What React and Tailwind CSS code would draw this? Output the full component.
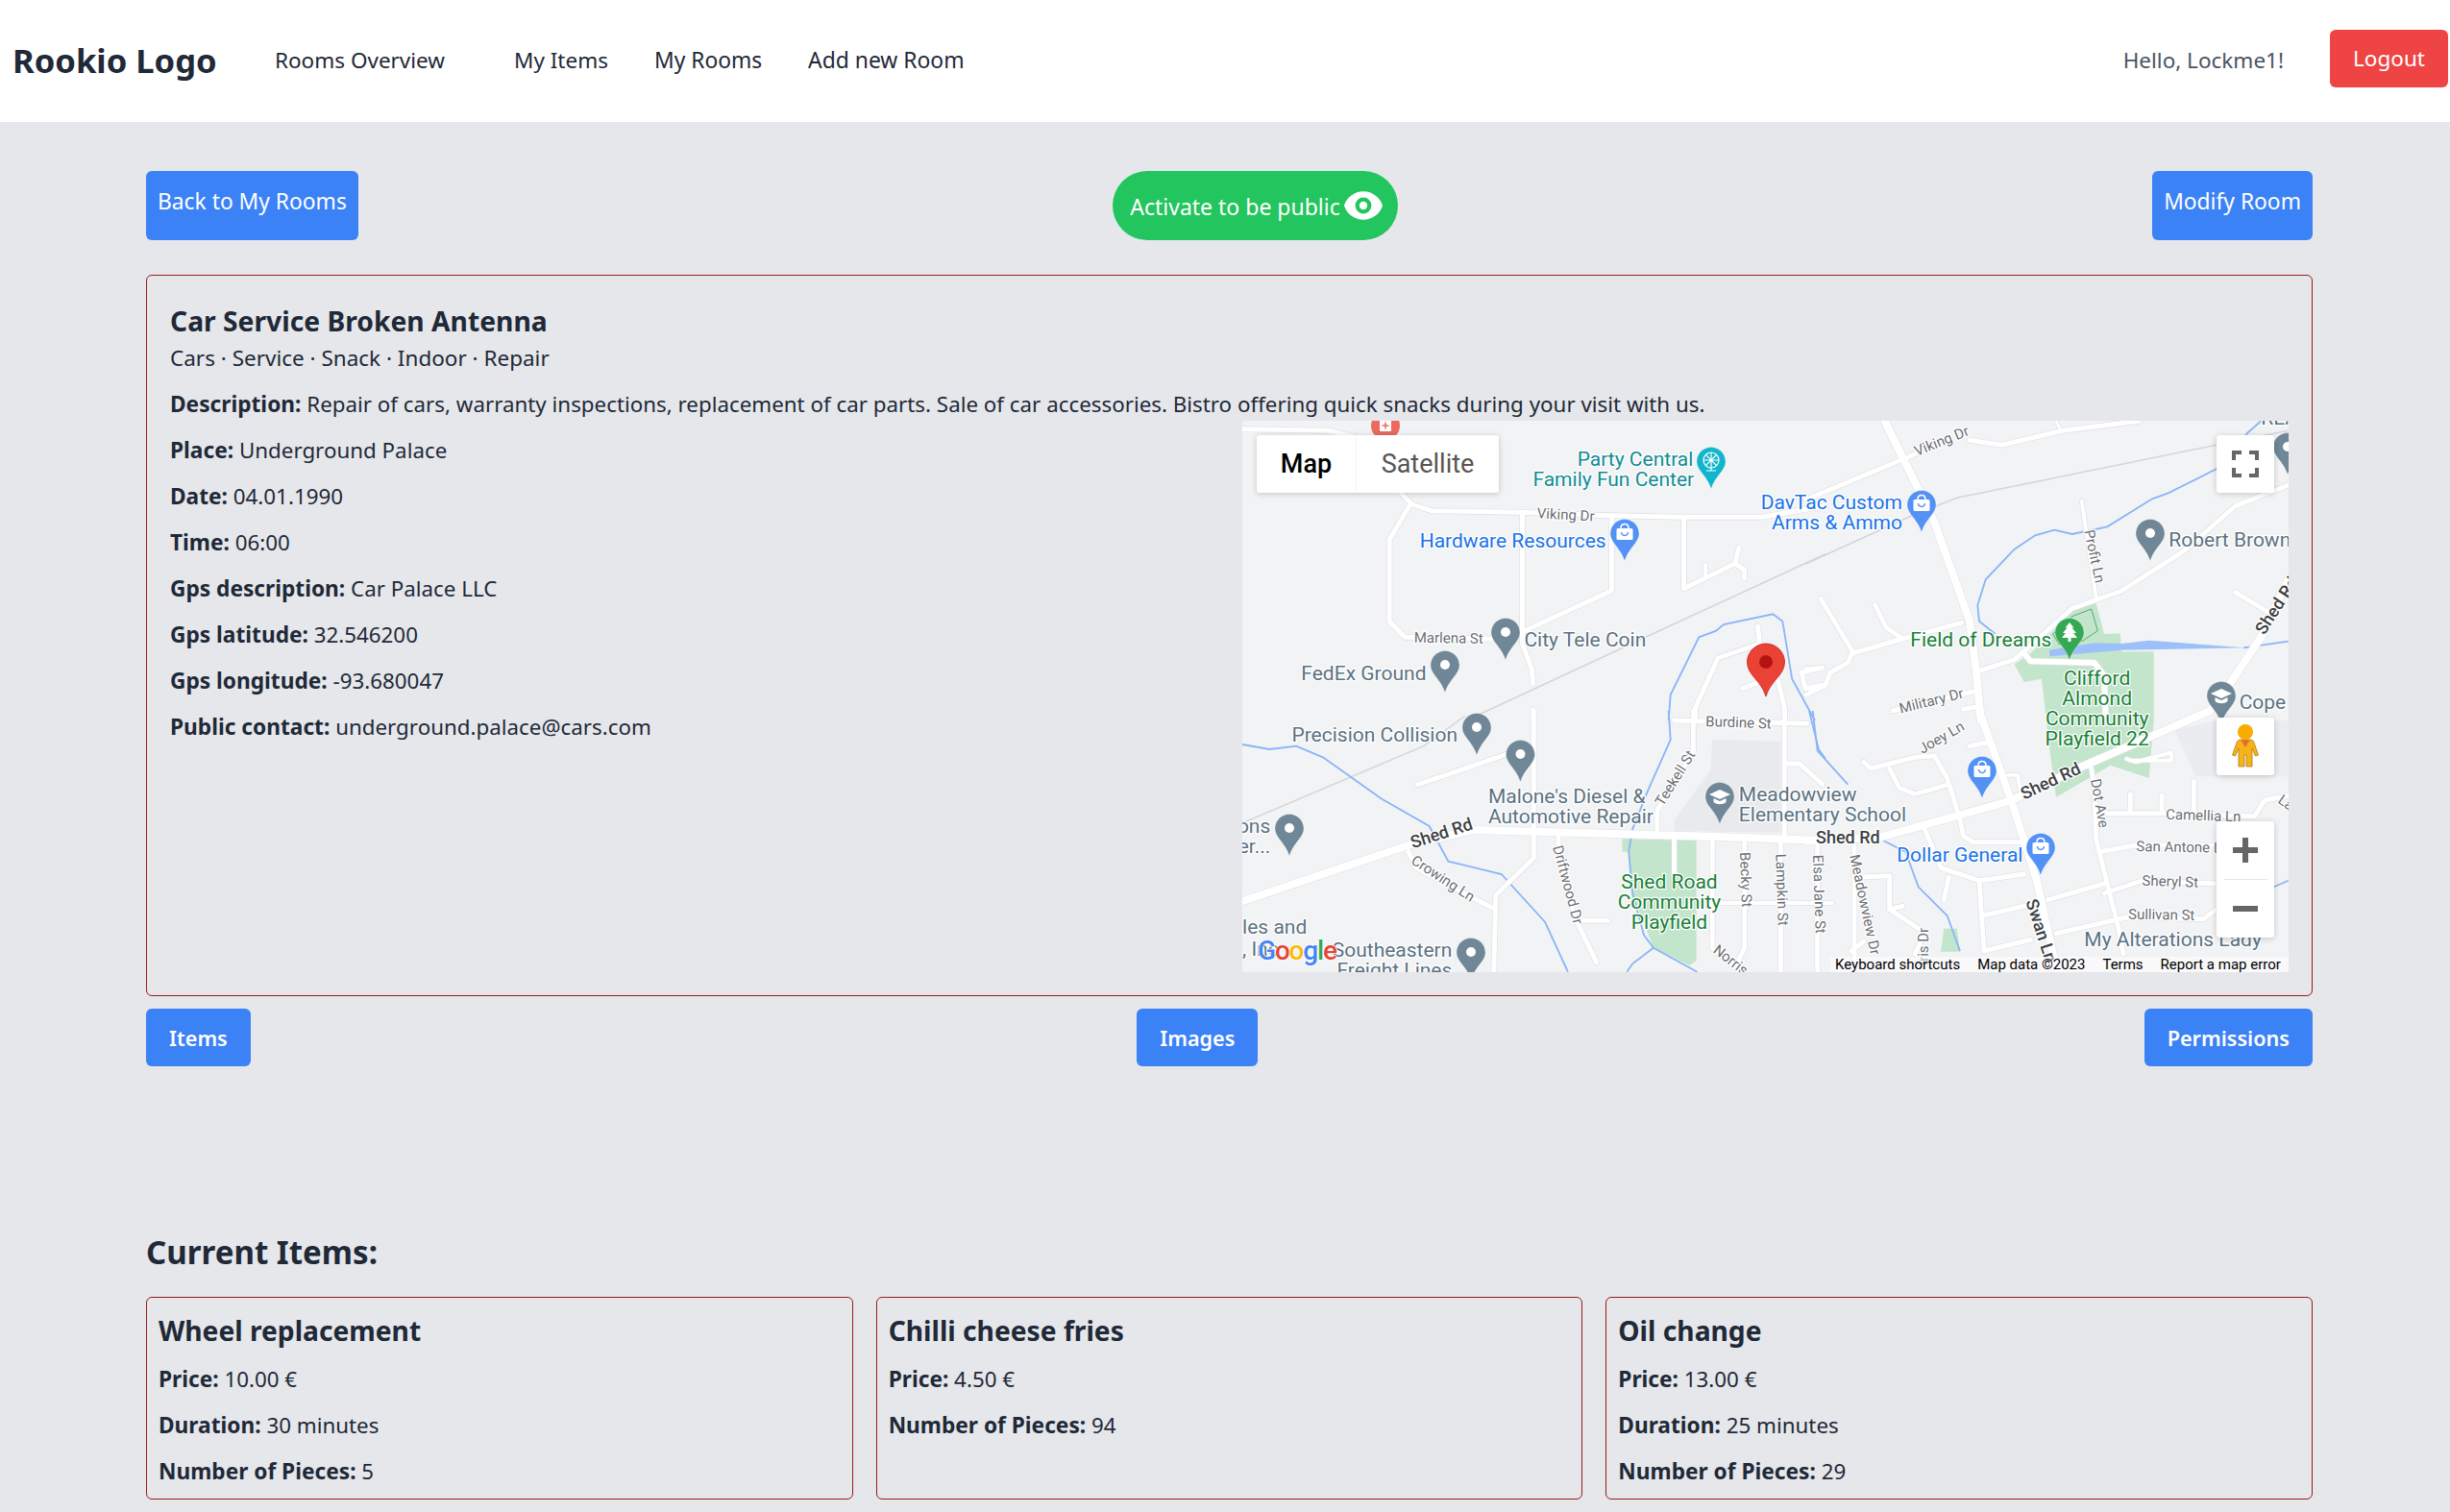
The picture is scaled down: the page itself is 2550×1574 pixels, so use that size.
import React from "react";
import { HiEye } from "react-icons/hi";

const Z3 = ([x, y]) => [1280 + x / 2.529, 430 + y / 3];
const Z4 = ([x, y]) => [1880 + x / 3, 430 + y / 3];
const Z5 = ([x, y]) => [1280 + x / 2.529, 740 + y / 3];
const Z6 = ([x, y]) => [1880 + x / 3, 740 + y / 3];
const path = (z, pts) =>
  pts.map((p, i) => { const [x, y] = z(p); return `${i ? "L" : "M"}${x.toFixed(1)} ${y.toFixed(1)}`; }).join(" ");

const roads = [
  [Z3, [[33,50],[260,55],[330,75]], 5],
  [Z3, [[450,250],[480,285],[530,305],[760,310],[1000,320],[1190,325],[1400,325],[1568,290]], 5],
  [Z4, [[0,270],[300,145],[340,128]], 5],
  [Z4, [[510,85],[610,100],[800,55],[1040,25]], 5],
  [Z4, [[780,25],[795,55]], 3],
  [Z3, [[475,285],[420,395],[420,650],[460,700],[690,705]], 5],
  [Z3, [[770,315],[770,720],[795,800],[798,845]], 5],
  [Z3, [[1005,325],[1005,555],[775,680]], 5],
  [Z3, [[1195,330],[1195,548],[1330,470],[1340,420]], 5],
  [Z3, [[1330,470],[1355,490],[1355,515]], 5],
  [Z3, [[1252,475],[1252,510]], 4],
  [Z3, [[1390,665],[1395,720],[1285,765],[1225,920],[1225,960]], 5],
  [Z3, [[1350,860],[1440,820],[1460,920],[1460,960]], 5],
  [Z3, [[1505,810],[1560,795]], 5],
  [Z3, [[1505,810],[1515,860],[1560,850]], 5],
  [Z3, [[798,925],[798,960]], 4],
  [Z4, [[540,805],[650,770],[740,690],[830,610],[985,555],[1180,430],[1340,290],[1505,225]], 5],
  [Z4, [[905,575],[860,275]], 4],
  [Z4, [[45,580],[145,745],[130,780],[75,810],[60,850],[0,880]], 5],
  [Z4, [[145,750],[300,705],[485,655]], 5],
  [Z4, [[215,600],[250,670],[300,705]], 5],
  [Z4, [[0,800],[40,797]], 5],
  [Z4, [[270,930],[520,870]], 5],
  [Z4, [[490,925],[530,918]], 5],
  [Z4, [[680,750],[700,775],[900,780],[930,820],[935,960]], 6],
  [Z4, [[1340,560],[1440,620]], 5],
  [Z6, [[180,160],[200,180],[340,145],[400,140],[440,210],[480,340],[490,390],[520,410],[680,410]], 5],
  [Z6, [[260,180],[290,240],[340,260],[445,230]], 5],
  [Z6, [[370,370],[420,490],[540,530],[680,510]], 5],
  [Z6, [[540,530],[555,750],[700,715]], 5],
  [Z6, [[550,640],[680,610]], 5],
  [Z6, [[445,520],[430,590]], 5],
  [Z6, [[510,110],[560,100]], 5],
  [Z6, [[630,200],[660,200],[670,260]], 4],
  [Z6, [[890,180],[900,240],[905,400],[975,680],[990,760]], 5],
  [Z6, [[930,320],[1120,320],[1400,330],[1430,280],[1505,265]], 5],
  [Z6, [[1210,220],[1210,320]], 5],
  [Z6, [[1012,260],[1012,320]], 5],
  [Z6, [[1110,265],[1110,320]], 5],
  [Z6, [[915,440],[1030,420],[1270,420]], 5],
  [Z6, [[930,570],[1050,530],[1280,540]], 5],
  [Z6, [[755,590],[930,540]], 5],
  [Z6, [[780,695],[1000,645],[1240,650],[1280,620]], 5],
  [Z6, [[1000,150],[1030,160],[1140,130],[1140,155],[1010,155]], 4],
  [Z5, [[495,230],[730,135]], 5],
  [Z5, [[800,0],[800,460],[700,575],[695,815]], 5],
  [Z5, [[470,440],[490,490],[690,615]], 5],
  [Z5, [[865,390],[865,450],[910,650],[965,785]], 5],
  [Z5, [[920,655],[995,655]], 5],
  [Z5, [[1125,370],[1125,310],[1220,130],[1220,0]], 5],
  [Z5, [[1170,30],[1520,40]], 5],
  [Z5, [[1460,0],[1460,400]], 5],
  [Z5, [[1460,165],[1500,165],[1560,230]], 5],
  [Z5, [[1270,400],[1270,740],[1330,800],[1355,740],[1355,400]], 5],
  [Z5, [[1450,405],[1450,815]], 5],
  [Z5, [[1170,400],[1170,510]], 5],
  [Z5, [[1290,600],[1568,600]], 4],
  [Z6, [[0,600],[80,600]], 4],
  [Z6, [[35,410],[35,815]], 5],
  [Z6, [[150,420],[150,815]], 5],
  [Z6, [[160,520],[260,515],[260,620],[350,680]], 5],
  [Z6, [[260,620],[300,610]], 5],
  [Z6, [[140,750],[180,720]], 5],
  [Z6, [[340,760],[370,690]], 5],
];

const mains = [
  [Z5, [[33,595],[470,420],[640,372],[1200,390],[1568,405]], 8],
  [Z6, [[0,405],[230,395],[640,280],[870,170],[1260,0]], 8],
  [Z4, [[1260,930],[1300,880],[1420,700],[1505,520]], 8],
  [Z4, [[245,25],[400,340],[510,650],[530,800],[545,960]], 8],
  [Z6, [[540,0],[640,280],[720,530],[770,760],[790,815]], 8],
];

const rivers = [
  [Z3, [[1540,960],[1480,830],[1455,650],[1430,628],[1300,660],[1280,680],[1235,700],[1160,880],[1155,960]]],
  [Z5, [[1155,0],[1160,90],[1100,250],[1060,370],[1050,440],[1060,570],[1090,700],[1115,740],[1060,790],[1045,815]]],
  [Z5, [[1115,740],[1230,815]]],
  [Z5, [[1525,0],[1550,120],[1568,150]]],
  [Z6, [[20,0],[35,125],[130,230]]],
  [Z6, [[240,405],[310,440],[350,550],[440,640],[480,750]]],
  [Z5, [[33,105],[105,120],[175,110],[245,145],[400,275],[525,360],[575,470],[715,510],[830,660],[890,815]]],
  [Z4, [[1420,25],[1380,60],[1280,175],[1130,250],[1080,268],[940,355],[830,378],[775,365],[715,382],[650,425],[560,520],[535,600],[540,650],[590,690]]],
  [Z4, [[1365,733],[1505,713]]],
  [Z6, [[1460,550],[1505,530]]],
];

const rails = [
  [Z3, [[650,945],[1130,680],[1568,440]]],
  [Z4, [[0,470],[330,320],[470,265],[640,230],[1280,100],[1505,55]]],
  [Z5, [[620,15],[510,110],[33,350]]],
];

const poly = (z, pts) => path(z, pts) + " Z";

const LABEL = "#5b7282";
const BLUE = "#1a73e8";
const GREEN = "#188038";
const TEAL = "#0f8c94";
const STREET = "#6a6e72";
const DARK = "#3c4043";

// [zone, x, y, text, color, size, anchor, rotation]
const labels = [
  [Z3,1220,165,"Party Central",TEAL,21,"end"],
  [Z3,1222,228,"Family Fun Center",TEAL,21,"end"],
  [Z3,500,420,"Hardware Resources",BLUE,21],
  [Z4,300,300,"DavTac Custom",BLUE,21,"end"],
  [Z4,300,362,"Arms & Ammo",BLUE,21,"end"],
  [Z3,808,328,"Viking Dr",STREET,15,"start",3],
  [Z3,485,716,"Marlena St",STREET,15,"start",1],
  [Z3,775,730,"City Tele Coin",LABEL,21],
  [Z3,188,833,"FedEx Ground",LABEL,21],
  [Z4,345,135,"Viking Dr",STREET,15,"start",-22],
  [Z4,868,368,"Profit Ln",STREET,15,"start",78],
  [Z4,1132,418,"Robert Brown",LABEL,21],
  [Z4,1430,695,"Shed Rd",DARK,18,"start",-57],
  [Z4,325,730,"Field of Dreams",GREEN,21],
  [Z4,908,850,"Clifford",GREEN,21,"middle"],
  [Z4,908,912,"Almond",GREEN,21,"middle"],
  [Z4,908,975,"Community",GREEN,21,"middle"],
  [Z6,908,108,"Playfield 22",GREEN,21,"middle"],
  [Z4,1352,925,"Cope",LABEL,21],
  [Z4,295,938,"Military Dr",STREET,15,"start",-14],
  [Z4,1420,35,"REA",LABEL,21],
  [Z5,1252,48,"Burdine St",STREET,15,"start",2],
  [Z5,163,97,"Precision Collision",LABEL,21],
  [Z5,680,288,"Malone's Diesel &",LABEL,21],
  [Z5,680,352,"Automotive Repair",LABEL,21],
  [Z5,1140,300,"Teekell St",STREET,15,"start",-58],
  [Z5,1340,282,"Meadowview",LABEL,21],
  [Z5,1340,345,"Elementary School",LABEL,21],
  [Z5,482,430,"Shed Rd",DARK,18,"start",-18],
  [Z5,475,475,"Crowing Ln",STREET,15,"start",33],
  [Z5,850,425,"Driftwood Dr",STREET,15,"start",75],
  [Z5,1157,555,"Shed Road",GREEN,21,"middle"],
  [Z5,1157,618,"Community",GREEN,21,"middle"],
  [Z5,1157,680,"Playfield",GREEN,21,"middle"],
  [Z5,1343,442,"Becky St",STREET,15,"start",88],
  [Z5,1437,447,"Lampkin St",STREET,15,"start",88],
  [Z5,1535,450,"Elsa Jane St",STREET,15,"start",88],
  [Z5,1270,752,"Norris",STREET,15,"start",38],
  [Z5,107,380,"ons",LABEL,21,"end"],
  [Z5,107,445,"er...",LABEL,21,"end"],
  [Z5,203,697,"les and",LABEL,21,"end"],
  [Z5,33,765,", Inc",LABEL,21],
  [Z5,585,767,"Southeastern",LABEL,21,"end"],
  [Z5,585,830,"Freight Lines",LABEL,21,"end"],
  [Z6,135,452,"Meadowview Dr",STREET,15,"start",78],
  [Z6,362,135,"Joey Ln",STREET,15,"start",-30],
  [Z6,680,278,"Shed Rd",DARK,18,"start",-25],
  [Z6,888,215,"Dot Ave",STREET,15,"start",80],
  [Z6,1122,338,"Camellia Ln",STREET,15,"start",2],
  [Z6,1470,285,"La",STREET,15,"start",35],
  [Z6,1030,438,"San Antone Ln",STREET,15,"start",1],
  [Z6,1048,545,"Sheryl St",STREET,15,"start",2],
  [Z6,1005,650,"Sullivan St",STREET,15,"start",1],
  [Z6,685,595,"Swan Ln",DARK,18,"start",72],
  [Z6,283,470,"Dollar General",BLUE,21],
  [Z6,868,735,"My Alterations Lady",LABEL,21],
  [Z6,30,415,"Shed Rd",DARK,18],
  [Z6,380,795,"Iris Dr",STREET,15,"start",-90],
];

const PIN = "M0 -14.5 C8 -14.5 15 -8 15 0.5 C15 10 5 14 0 29 C-5 14 -15 10 -15 0.5 C-15 -8 -8 -14.5 0 -14.5 Z";

function Pin({ x, y, color = "#6f8796", kind = "dot" }) {
  return (
    <g transform={`translate(${x} ${y})`}>
      <path d={PIN} fill={color} stroke="#ffffff" strokeOpacity="0.5" strokeWidth="0.6" />
      {kind === "dot" && <circle r="5" fill="#ffffff" />}
      {kind === "bag" && (
        <g>
          <rect x="-8.5" y="-5" width="17" height="12" rx="1.5" fill="#ffffff" />
          <path d="M-4 -5 C-4 -11 4 -11 4 -5" fill="none" stroke="#ffffff" strokeWidth="1.6" />
          <path d="M-3.5 -1 C-3 3.5 3 3.5 3.5 -1" fill="none" stroke={color} strokeWidth="1.5" />
        </g>
      )}
      {kind === "school" && (
        <g>
          <path d="M0 -7 L11 -2 L0 3 L-11 -2 Z" fill="#ffffff" />
          <path d="M-6.5 2 L-6.5 6 C-3 9 3 9 6.5 6 L6.5 2 L0 5 Z" fill="#ffffff" />
        </g>
      )}
      {kind === "tree" && (
        <path d="M0 -10 L4.5 -4.5 L2.5 -4.5 L7 1 L4 1 L8 6 L1.5 6 L1.5 10 L-1.5 10 L-1.5 6 L-8 6 L-4 1 L-7 1 L-2.5 -4.5 L-4.5 -4.5 Z" fill="#ffffff" />
      )}
      {kind === "fun" && (
        <g fill="none" stroke="#ffffff" strokeWidth="1.2">
          <circle r="8" cy="-1" />
          <path d="M0 -9 L0 10 M-8 -1 L8 -1 M-5 10 L5 10 M-5.5 -6.5 L5.5 4.5 M5.5 -6.5 L-5.5 4.5" />
        </g>
      )}
    </g>
  );
}

function MapDrawing() {
  const rd = (r, i, col, extra) => (
    <path key={i} d={path(r[0], r[1])} fill="none" stroke={col} strokeWidth={r[2] + extra} strokeLinecap="round" strokeLinejoin="round" />
  );
  return (
    <svg viewBox="1293 438 1089 574" width="1089" height="574" className="block" style={{ fontFamily: "Roboto, sans-serif" }}>
      <rect x="1293" y="438" width="1089" height="574" fill="#f2f3f5" />
      <path d={poly(Z5, [[1270,90],[1450,95],[1450,380],[1170,375],[1170,340],[1265,185]])} fill="#e8eaed" />
      <path d={poly(Z6, [[1150,60],[1280,30],[1505,30],[1505,205],[1215,205]])} fill="#ebecef" />
      <path d={poly(Z4, [[905,595],[930,690],[980,688],[985,745],[1085,745],[1085,960],[1070,1140],[950,1100],[780,1200],[760,1050],[735,830],[680,840],[650,785],[700,750],[770,680],[830,610]])} fill="#c3e5cb" />
      <path d={poly(Z5, [[1033,400],[1228,405],[1228,780],[1210,795],[1115,740],[1060,570],[1050,440],[1033,440]])} fill="#c3e5cb" />
      <path d={poly(Z6, [[430,680],[470,680],[480,752],[420,752]])} fill="#c3e5cb" />
      <path d={poly(Z4, [[770,690],[830,635],[890,612],[910,680],[865,710],[790,722]])} fill="none" stroke="#5aa76e" strokeWidth="1" />
      {rails.map((r, i) => <path key={i} d={path(r[0], r[1])} fill="none" stroke="#d3d5d8" strokeWidth="1.5" />)}
      {rivers.map((r, i) => <path key={i} d={path(r[0], r[1])} fill="none" stroke="#8ab4f8" strokeWidth="1.8" />)}
      <path d={poly(Z4, [[760,740],[900,718],[985,720],[1070,710],[1370,733],[985,740],[760,760]])} fill="#9cc0f9" />
      {roads.map((r, i) => rd(r, i, "#dcdee1", 1.2))}
      {mains.map((r, i) => rd(r, i, "#e0e2e5", 1.2))}
      {roads.map((r, i) => rd(r, i, "#ffffff", 0))}
      {mains.map((r, i) => rd(r, i, "#ffffff", 0))}

      <g transform="translate(1442 443)">
        <circle r="15" fill="#ea6a5f" />
        <rect x="-6" y="-6" width="12" height="12" rx="1" fill="#ffffff" />
        <path d="M0 -3.5 L0 3.5 M-3.5 0 L3.5 0" stroke="#ea6a5f" strokeWidth="1.5" />
      </g>

      <g stroke="#ffffff" strokeWidth="2.5" strokeLinejoin="round">
        {labels.map(([z, x, y, t, c, s, a = "start", rot = 0], i) => {
          const [px, py] = z([x, y]);
          return (
            <text key={i} x={px} y={py} fill={c} fontSize={s} textAnchor={a} fontWeight={s === 18 ? 500 : 400}
              transform={rot ? `rotate(${rot} ${px} ${py})` : undefined} style={{ paintOrder: "stroke" }}>
              {t}
            </text>
          );
        })}
      </g>

      <Pin x={1781} y={480} color="#12b5cb" kind="fun" />
      <Pin x={1691} y={555} color="#5491f5" kind="bag" />
      <Pin x={2000} y={525} color="#5491f5" kind="bag" />
      <Pin x={2063} y={802} color="#5491f5" kind="bag" />
      <Pin x={2124} y={882} color="#5491f5" kind="bag" />
      <Pin x={1567} y={658} />
      <Pin x={1504} y={692} />
      <Pin x={2381} y={465} />
      <Pin x={2238} y={555} />
      <Pin x={1537} y={757} />
      <Pin x={1582.5} y={785} />
      <Pin x={1342} y={862} />
      <Pin x={1531} y={991} />
      <Pin x={2154} y={658} color="#34a853" kind="tree" />
      <Pin x={2312} y={724} kind="school" />
      <Pin x={1790} y={829} kind="school" />

      <g transform="translate(1838 670)">
        <path d="M0 0 C11 0 19.5 9 19.5 19 C19.5 33 5 38 0 55 C-5 38 -19.5 33 -19.5 19 C-19.5 9 -11 0 0 0 Z" fill="#ea4335" stroke="#c5221f" strokeWidth="0.8" />
        <circle cy="19" r="7" fill="#b31412" />
      </g>

      <text x="1309" y="999" fontSize="28" fontWeight="500" stroke="#ffffff" strokeWidth="1.5" style={{ paintOrder: "stroke" }} letterSpacing="-1.2">
        <tspan fill="#4285f4">G</tspan><tspan fill="#ea4335">o</tspan><tspan fill="#fbbc04">o</tspan><tspan fill="#4285f4">g</tspan><tspan fill="#34a853">l</tspan><tspan fill="#ea4335">e</tspan>
      </text>
    </svg>
  );
}

function MapControls() {
  return (
    <>
      <div className="absolute left-[15px] top-[15px] flex h-[60px] w-[252px] rounded-[3px] bg-white shadow-[0_1px_6px_rgba(0,0,0,0.2)]">
        <div className="flex w-[104px] items-center justify-center border-r border-gray-100 text-[27px] font-medium text-black">Map</div>
        <div className="flex flex-1 items-center justify-center text-[27px] text-[#565656]">Satellite</div>
      </div>
      <div className="absolute left-[1014px] top-[15px] flex h-[60px] w-[60px] items-center justify-center rounded-[3px] bg-white shadow-[0_1px_6px_rgba(0,0,0,0.2)]">
        <svg width="28" height="28" viewBox="0 0 28 28" fill="none" stroke="#666666" strokeWidth="4">
          <path d="M2 10 V2 H10 M18 2 H26 V10 M26 18 V26 H18 M10 26 H2 V18" />
        </svg>
      </div>
      <div className="absolute left-[1014px] top-[309px] flex h-[60px] w-[60px] items-center justify-center rounded-[3px] bg-white shadow-[0_1px_6px_rgba(0,0,0,0.2)]">
        <svg width="28" height="48" viewBox="0 0 28 48">
          <path d="M9 17 L19 17 C22 17 23 19 24 23 L27.5 33 L24.5 34 L21 26 L21 45 L15 45 L15 33 L13 33 L13 45 L7 45 L7 26 L3.5 34 L0.5 33 L4 23 C5 19 6 17 9 17 Z" fill="#f5b21b" stroke="#b07c12" strokeWidth="0.8" />
          <path d="M9 17 L19 17 L14 25 Z" fill="#e0702a" />
          <circle cx="14" cy="9" r="8" fill="#f9ab00" />
        </svg>
      </div>
      <div className="absolute left-[1014px] top-[417px] flex h-[121px] w-[60px] flex-col items-center rounded-[3px] bg-white shadow-[0_1px_6px_rgba(0,0,0,0.2)]">
        <div className="flex h-[60px] items-center justify-center">
          <svg width="28" height="28" viewBox="0 0 28 28"><path d="M11 1 H17 V11 H27 V17 H17 V27 H11 V17 H1 V11 H11 Z" fill="#666666" /></svg>
        </div>
        <div className="h-px w-[45px] bg-[#e6e6e6]" />
        <div className="flex h-[60px] items-center justify-center">
          <svg width="28" height="28" viewBox="0 0 28 28"><rect x="1" y="11" width="26" height="6" fill="#666666" /></svg>
        </div>
      </div>
      <div className="absolute bottom-0 right-0 flex h-[16px] w-[477px] items-center bg-white/50 text-[15px] leading-[16px] text-black">
        <span className="ml-[5px]">Keyboard shortcuts</span>
        <span className="ml-[18px]">Map data ©2023</span>
        <span className="ml-[18px]">Terms</span>
        <span className="ml-[18px]">Report a map error</span>
      </div>
    </>
  );
}

const details = [
  ["Place:", "Underground Palace"],
  ["Date:", "04.01.1990"],
  ["Time:", "06:00"],
  ["Gps description:", "Car Palace LLC"],
  ["Gps latitude:", "32.546200"],
  ["Gps longitude:", "-93.680047"],
  ["Public contact:", "underground.palace@cars.com"],
];

const items = [
  { name: "Wheel replacement", rows: [["Price:", "10.00 €"], ["Duration:", "30 minutes"], ["Number of Pieces:", "5"]] },
  { name: "Chilli cheese fries", rows: [["Price:", "4.50 €"], ["Number of Pieces:", "94"]] },
  { name: "Oil change", rows: [["Price:", "13.00 €"], ["Duration:", "25 minutes"], ["Number of Pieces:", "29"]] },
];

function Field({ label, value }) {
  return (
    <p className="mt-3 h-[36px] whitespace-nowrap text-[22.35px] leading-[38px]">
      <span className="text-[22.7px] font-bold">{label}</span> {value}
    </p>
  );
}

export default function App() {
  return (
    <div className="h-[1574px] w-[2550px] overflow-hidden bg-[#e5e7eb] text-[22.5px] leading-[36px] text-[#1f2937]" style={{ fontFamily: "'Noto Sans', sans-serif" }}>
      <nav className="flex h-[127px] items-center bg-white pb-[2px] pl-[13px] pr-[2px]">
        <div className="w-[273px] text-[34.6px] font-bold">Rookio Logo</div>
        <a className="w-[249px]">Rooms Overview</a>
        <a className="w-[146px]">My Items</a>
        <a className="w-[160px] text-[22.8px]">My Rooms</a>
        <a className="text-[22.9px]">Add new Room</a>
        <div className="ml-auto mr-[48px] text-[#4b5563]">Hello, Lockme1!</div>
        <button className="mb-[1px] flex h-[60px] w-[123px] items-center justify-center self-start mt-[31px] rounded-[6px] bg-[#ef4444] text-white">Logout</button>
      </nav>

      <main className="pl-[152px] pr-[143px] pt-[51px]">
        <div className="flex items-stretch justify-between">
          <button className="h-[72px] rounded-[6px] bg-[#3b82f6] px-3 pb-[22px] pt-[14px] text-[22.8px] text-white">Back to My Rooms</button>
          <button className="flex h-[72px] items-center gap-[3px] rounded-full bg-[#22c55e] pl-[18px] pr-[15px] text-[23px] text-white">
            <span className="pt-[2px]">Activate to be public</span>
            <HiEye className="h-[42px] w-[42px]" />
          </button>
          <button className="h-[72px] rounded-[6px] bg-[#3b82f6] px-3 pb-[22px] pt-[14px] text-[22.8px] text-white">Modify Room</button>
        </div>

        <section className="mt-9 rounded-[6px] border border-[#991b1b] px-6 pb-6 pt-[25px]">
          <h1 className="h-[42px] text-[28.25px] font-bold leading-[44px]">Car Service Broken Antenna</h1>
          <p className="h-[36px] leading-[38px]">Cars · Service · Snack · Indoor · Repair</p>
          <Field label="Description:" value="Repair of cars, warranty inspections, replacement of car parts. Sale of car accessories. Bistro offering quick snacks during your visit with us." />
          <div className="grid grid-cols-[1fr_1089px]">
            <div>
              {details.map(([l, v]) => <Field key={l} label={l} value={v} />)}
            </div>
            <div className="relative h-[574px] overflow-hidden rounded-[3px]" style={{ fontFamily: "Roboto, sans-serif" }}>
              <MapDrawing />
              <MapControls />
            </div>
          </div>
        </section>

        <div className="mt-[13px] flex justify-between">
          <button className="h-[60px] rounded-[6px] bg-[#3b82f6] px-6 pt-[2px] text-[21.6px] font-semibold text-white">Items</button>
          <button className="h-[60px] rounded-[6px] bg-[#3b82f6] px-6 pt-[2px] text-[21.6px] font-semibold text-white">Images</button>
          <button className="h-[60px] rounded-[6px] bg-[#3b82f6] px-6 pt-[2px] text-[21.6px] font-semibold text-white">Permissions</button>
        </div>

        <h2 className="mb-[19px] mt-[167px] text-[33.1px] font-bold leading-[54px]">Current Items:</h2>

        <div className="grid grid-cols-3 gap-6">
          {items.map((it) => (
            <div key={it.name} className="h-[211px] rounded-[6px] border border-[#991b1b] p-3">
              <h3 className="h-[42px] text-[28.2px] font-bold leading-[44px]">{it.name}</h3>
              {it.rows.map(([l, v]) => <Field key={l} label={l} value={v} />)}
            </div>
          ))}
        </div>
      </main>
    </div>
  );
}
